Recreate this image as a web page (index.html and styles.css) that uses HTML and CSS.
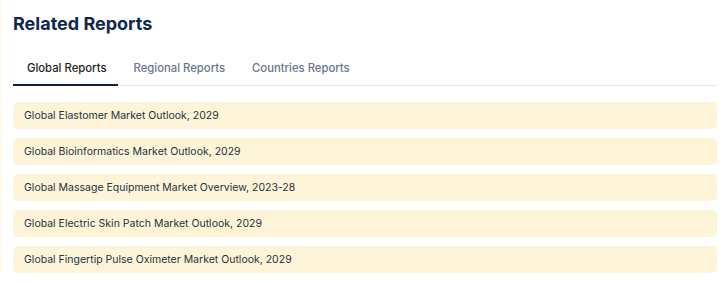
FILE: index.html
```html
<!DOCTYPE html>
<html lang="en">
<head>
    <meta charset="UTF-8">
    <meta name="viewport" content="width=device-width, initial-scale=1.0">
    <title>Related Reports</title>
    <link rel="stylesheet" href="styles.css">
</head>
<body>
    <div class="related">
        <h2 class="related-title">Related Reports</h2>

        <div class="tabs">
            <span class="tab active">Global Reports</span>
            <span class="tab">Regional Reports</span>
            <span class="tab">Countries Reports</span>
        </div>

        <ul class="report-list">
            <li class="report-item">Global Elastomer Market Outlook, 2029</li>
            <li class="report-item">Global Bioinformatics Market Outlook, 2029</li>
            <li class="report-item">Global Massage Equipment Market Overview, 2023-28</li>
            <li class="report-item">Global Electric Skin Patch Market Outlook, 2029</li>
            <li class="report-item">Global Fingertip Pulse Oximeter Market Outlook, 2029</li>
        </ul>
    </div>
</body>
</html>
```

FILE: styles.css
```css
body {
    margin: 0;
    font-family: Inter, "Noto Sans", sans-serif;
    background: #ffffff;
}
.related {
    padding: 12px 10px 0 11px;
    border-left: 2px solid #fffbef;
}
.related-title {
    margin: 0;
    font-size: 18px;
    line-height: 24px;
    font-weight: 700;
    color: #10294a;
}
.tabs {
    display: flex;
    margin-top: 20px;
    border-bottom: 1px solid #e6e7ea;
}
.tab {
    padding: 5px 12px 8px 14px;
    font-size: 11.3px;
    line-height: 15px;
    font-weight: 500;
    color: #6b7590;
}
.tab + .tab {
    padding-left: 15px;
}
.active {
    color: #1c1f26;
    border-bottom: 2px solid #0c2340;
    margin-bottom: -1px;
}
.report-list {
    list-style: none;
    margin: 16px 0 0;
    padding: 0;
}
.report-item {
    background: #fef5d8;
    border-radius: 5px;
    margin-bottom: 9px;
    padding: 0 11px;
    height: 27px;
    line-height: 27px;
    font-size: 10.5px;
    color: #273142;
}
```
